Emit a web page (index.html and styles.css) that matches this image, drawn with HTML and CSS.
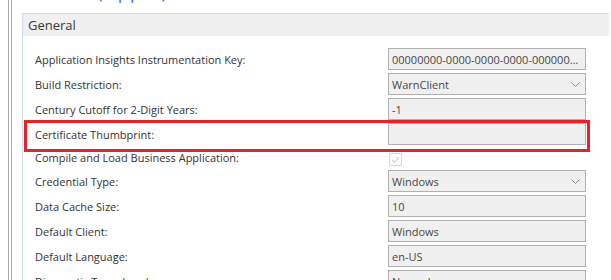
FILE: index.html
```html
<!DOCTYPE html>
<html lang="en">
<head>
<meta charset="utf-8">
<title>General settings</title>
<link rel="stylesheet" href="styles.css">
</head>
<body>
<div class="window">
  <div class="rail"></div>
  <div class="main">
    <div class="title"><span>Server (Upper)</span></div>
    <section class="group">
      <div class="group-head">General</div>
      <div class="rows">
        <div class="row">
          <span class="label">Application Insights Instrumentation Key:</span>
          <div class="field"><span class="value">00000000-0000-0000-0000-00000000000000</span></div>
        </div>
        <div class="row">
          <span class="label">Build Restriction:</span>
          <div class="field select"><span class="value">WarnClient</span>
            <svg class="chev" width="9" height="5" viewBox="0 0 9 5"><polyline points="0.5,0.5 4.5,4.5 8.5,0.5" fill="none" stroke="#8a8a8a" stroke-width="1"/></svg>
          </div>
        </div>
        <div class="row">
          <span class="label">Century Cutoff for 2-Digit Years:</span>
          <div class="field"><span class="value">-1</span></div>
        </div>
        <div class="row highlight">
          <span class="label">Certificate Thumbprint:</span>
          <div class="field"><span class="value"></span></div>
          <span class="mark" aria-hidden="true"></span>
        </div>
        <div class="row check-row">
          <span class="label">Compile and Load Business Application:</span>
          <span class="checkbox">
            <svg width="12" height="12" viewBox="0 0 12 12"><polyline points="2.5,6 5,8.5 9.5,3" fill="none" stroke="#c9c9c9" stroke-width="1.2"/></svg>
          </span>
        </div>
        <div class="row">
          <span class="label">Credential Type:</span>
          <div class="field select"><span class="value">Windows</span>
            <svg class="chev" width="9" height="5" viewBox="0 0 9 5"><polyline points="0.5,0.5 4.5,4.5 8.5,0.5" fill="none" stroke="#8a8a8a" stroke-width="1"/></svg>
          </div>
        </div>
        <div class="row">
          <span class="label">Data Cache Size:</span>
          <div class="field"><span class="value">10</span></div>
        </div>
        <div class="row">
          <span class="label">Default Client:</span>
          <div class="field"><span class="value">Windows</span></div>
        </div>
        <div class="row">
          <span class="label">Default Language:</span>
          <div class="field"><span class="value">en-US</span></div>
        </div>
        <div class="row">
          <span class="label">Diagnostic Trace Level:</span>
          <div class="field"><span class="value">Normal</span></div>
        </div>
      </div>
    </section>
  </div>
</div>
</body>
</html>
```
FILE: styles.css
```css
html, body {
  margin: 0;
  padding: 0;
  background: #ffffff;
}
body {
  font-family: "Open Sans", "Noto Sans", sans-serif;
  font-size: 11px;
  color: #333333;
  overflow: hidden;
  height: 280px;
}
.window {
  display: flex;
  height: 280px;
  padding-left: 8px;
  overflow: hidden;
}
.rail {
  width: 2px;
  border-left: 1px solid #a9a9a9;
  border-right: 1px solid #a9a9a9;
  flex: none;
}
.main {
  flex: 1;
  padding-left: 10px;
  margin-right: 2px;
  min-width: 0;
}
.title {
  height: 13px;
  overflow: hidden;
}
.title span {
  display: block;
  margin-top: -21px;
  padding-left: 10px;
  font-size: 20px;
  line-height: 24px;
  color: #3a86d6;
}
.group {
  border-top: 1px solid #cfdcef;
  border-left: 1px solid #cfdcef;
  height: 300px;
}
.group-head {
  height: 22px;
  background: #f0f0f0;
  padding-left: 5px;
  display: flex;
  align-items: center;
  font-size: 13px;
  color: #3b3b3b;
}
.rows {
  padding: 12px 0 0 12px;
  display: flex;
  flex-direction: column;
  gap: 3px;
}
.row {
  display: flex;
  align-items: center;
  height: 22px;
  position: relative;
}
.label {
  width: 353px;
  flex: none;
  white-space: nowrap;
}
.field {
  width: 196px;
  height: 20px;
  border: 1px solid #b0b0b0;
  background: #f0f0f0;
  display: flex;
  align-items: center;
  color: #474747;
  flex: none;
}
.value {
  flex: 1;
  min-width: 0;
  padding-left: 3px;
  padding-right: 4px;
  white-space: nowrap;
  overflow: hidden;
  text-overflow: ellipsis;
}
.chev {
  flex: none;
  margin-right: 5px;
}
.check-row {
  height: 19px;
}
.checkbox {
  width: 11px;
  height: 11px;
  border: 1px solid #d6d6d6;
  margin-left: 1px;
  align-self: flex-start;
  margin-top: 5px;
  display: flex;
}
.mark {
  position: absolute;
  left: -11px;
  right: 19px;
  top: -3px;
  bottom: -7px;
  border: 3px solid #e3232c;
  pointer-events: none;
}
```
